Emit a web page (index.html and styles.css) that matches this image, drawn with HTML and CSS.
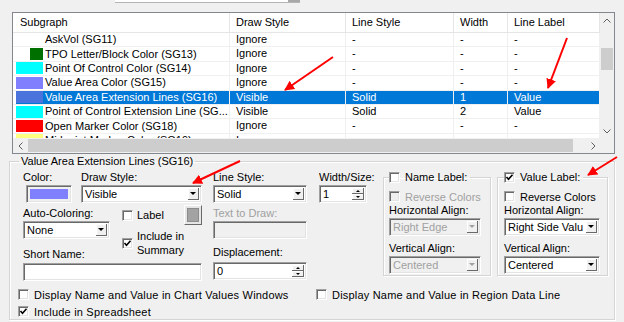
FILE: index.html
```html
<!DOCTYPE html>
<html lang="en">

<head>
    <meta charset="UTF-8">
    <meta name="viewport" content="width=device-width, initial-scale=1.0">
    <title>Subgraphs</title>
    <link rel="stylesheet" href="styles.css">
</head>

<body>
    <div class="top-combo"><span class="top-combo-btn"></span></div>

    <div class="listview">
        <div class="lv-main">
            <div class="lv-grid">
                <div class="lv-row lv-head">
                    <div class="cell">Subgraph</div>
                    <div class="cell">Draw Style</div>
                    <div class="cell">Line Style</div>
                    <div class="cell">Width</div>
                    <div class="cell">Line Label</div>
                </div>
                <div class="lv-row">
                    <div class="cell name"><span class="sw sw-none"></span>AskVol (SG11)</div>
                    <div class="cell">Ignore</div>
                    <div class="cell">-</div>
                    <div class="cell">-</div>
                    <div class="cell">-</div>
                </div>
                <div class="lv-row">
                    <div class="cell name"><span class="sw sw-small"></span>TPO Letter/Block Color (SG13)</div>
                    <div class="cell">Ignore</div>
                    <div class="cell">-</div>
                    <div class="cell">-</div>
                    <div class="cell">-</div>
                </div>
                <div class="lv-row">
                    <div class="cell name"><span class="sw sw-cyan"></span>Point Of Control Color (SG14)</div>
                    <div class="cell">Ignore</div>
                    <div class="cell">-</div>
                    <div class="cell">-</div>
                    <div class="cell">-</div>
                </div>
                <div class="lv-row">
                    <div class="cell name"><span class="sw sw-lavender"></span>Value Area Color (SG15)</div>
                    <div class="cell">Ignore</div>
                    <div class="cell">-</div>
                    <div class="cell">-</div>
                    <div class="cell">-</div>
                </div>
                <div class="lv-row selected">
                    <div class="cell name"><span class="sw sw-lavender-sel"></span>Value Area Extension Lines (SG16)</div>
                    <div class="cell">Visible</div>
                    <div class="cell">Solid</div>
                    <div class="cell">1</div>
                    <div class="cell">Value</div>
                </div>
                <div class="lv-row">
                    <div class="cell name"><span class="sw sw-cyan"></span>Point of Control Extension Line (SG...</div>
                    <div class="cell">Visible</div>
                    <div class="cell">Solid</div>
                    <div class="cell">2</div>
                    <div class="cell">Value</div>
                </div>
                <div class="lv-row">
                    <div class="cell name"><span class="sw sw-red"></span>Open Marker Color (SG18)</div>
                    <div class="cell">Ignore</div>
                    <div class="cell">-</div>
                    <div class="cell">-</div>
                    <div class="cell">-</div>
                </div>
                <div class="lv-row">
                    <div class="cell name"><span class="sw sw-yellow"></span>Midpoint Marker Color (SG19)</div>
                    <div class="cell">Ignore</div>
                    <div class="cell">-</div>
                    <div class="cell">-</div>
                    <div class="cell">-</div>
                </div>
            </div>
            <div class="vscroll">
                <div class="sb-btn"><svg width="8" height="5" viewBox="0 0 8 5"><path d="M0.5 4.5 L4 1 L7.5 4.5" fill="none" stroke="#606060"/></svg></div>
                <div class="sb-track"><div class="vthumb"></div></div>
                <div class="sb-btn"><svg width="8" height="5" viewBox="0 0 8 5"><path d="M0.5 0.5 L4 4 L7.5 0.5" fill="none" stroke="#606060"/></svg></div>
            </div>
        </div>
        <div class="hscroll">
            <div class="sb-btn"><svg width="5" height="8" viewBox="0 0 5 8"><path d="M4.5 0.5 L1 4 L4.5 7.5" fill="none" stroke="#606060"/></svg></div>
            <div class="sb-track"><div class="hthumb"></div></div>
            <div class="sb-btn"><svg width="5" height="8" viewBox="0 0 5 8"><path d="M0.5 0.5 L4 4 L0.5 7.5" fill="none" stroke="#606060"/></svg></div>
            <div class="sb-corner"></div>
        </div>
    </div>

    <fieldset class="group">
        <legend>Value Area Extension Lines (SG16)</legend>
        <div class="main-row">
            <div class="col-left">
                <div class="row1">
                    <div class="f-color">
                        <div class="lbl">Color:</div>
                        <div class="color-btn"><span></span></div>
                    </div>
                    <div class="f-draw">
                        <div class="lbl">Draw Style:</div>
                        <div class="combo"><span class="combo-text">Visible</span><span class="combo-btn"><i></i></span></div>
                    </div>
                </div>
                <div class="row2">
                    <div class="col-auto">
                        <div class="lbl">Auto-Coloring:</div>
                        <div class="combo combo-auto"><span class="combo-text">None</span><span class="combo-btn"><i></i></span></div>
                        <div class="lbl short-lbl">Short Name:</div>
                    </div>
                    <div class="col-checks">
                        <div class="label-row">
                            <span class="chk"></span><span class="chk-text">Label</span>
                            <span class="gray-btn"><span></span></span>
                        </div>
                        <div class="summary-row">
                            <span class="chk"><svg width="9" height="9" viewBox="0 0 9 9"><path d="M1.5 4 L3.5 6.2 L7.5 1.8" fill="none" stroke="#000" stroke-width="1.6"/></svg></span>
                            <span class="chk-text two-lines">Include in<br>Summary</span>
                        </div>
                    </div>
                </div>
                <div class="textbox short-input"></div>
            </div>

            <div class="col-line">
                <div class="lbl">Line Style:</div>
                <div class="combo"><span class="combo-text">Solid</span><span class="combo-btn"><i></i></span></div>
                <div class="lbl disabled gap4">Text to Draw:</div>
                <div class="textbox disabled-box"></div>
                <div class="lbl gap7">Displacement:</div>
                <div class="spin spin-disp"><span class="spin-text">0</span><span class="spin-btns"><span><i class="up"></i></span><span><i class="down"></i></span></span></div>
            </div>

            <div class="col-width">
                <div class="lbl">Width/Size:</div>
                <div class="spin"><span class="spin-text">1</span><span class="spin-btns"><span><i class="up"></i></span><span><i class="down"></i></span></span></div>
            </div>

            <fieldset class="sub-group name-group">
                <legend><span class="chk"></span><span class="chk-text">Name Label:</span></legend>
                <div class="chk-row disabled"><span class="chk"></span><span class="chk-text">Reverse Colors</span></div>
                <div class="lbl">Horizontal Align:</div>
                <div class="combo combo-off"><span class="combo-text">Right Edge</span><span class="combo-btn"><i></i></span></div>
                <div class="lbl gap6">Vertical Align:</div>
                <div class="combo combo-off gap3"><span class="combo-text">Centered</span><span class="combo-btn"><i></i></span></div>
            </fieldset>

            <fieldset class="sub-group value-group">
                <legend><span class="chk"><svg width="9" height="9" viewBox="0 0 9 9"><path d="M1.5 4 L3.5 6.2 L7.5 1.8" fill="none" stroke="#000" stroke-width="1.6"/></svg></span><span class="chk-text">Value Label:</span></legend>
                <div class="chk-row"><span class="chk"></span><span class="chk-text">Reverse Colors</span></div>
                <div class="lbl">Horizontal Align:</div>
                <div class="combo"><span class="combo-text">Right Side Valu</span><span class="combo-btn"><i></i></span></div>
                <div class="lbl gap6">Vertical Align:</div>
                <div class="combo gap3"><span class="combo-text">Centered</span><span class="combo-btn"><i></i></span></div>
            </fieldset>
        </div>

        <div class="bottom-row">
            <div class="chk-item wide"><span class="chk"></span><span class="chk-text">Display Name and Value in Chart Values Windows</span></div>
            <div class="chk-item"><span class="chk"></span><span class="chk-text">Display Name and Value in Region Data Line</span></div>
        </div>
        <div class="bottom-row second">
            <div class="chk-item"><span class="chk"><svg width="9" height="9" viewBox="0 0 9 9"><path d="M1.5 4 L3.5 6.2 L7.5 1.8" fill="none" stroke="#000" stroke-width="1.6"/></svg></span><span class="chk-text">Include in Spreadsheet</span></div>
        </div>
    </fieldset>

    <!-- red annotation arrows drawn over the dialog -->
    <svg class="arrows" width="624" height="322" viewBox="0 0 624 322">
        <defs>
            <marker id="head" viewBox="0 0 10 10" refX="9" refY="5" markerWidth="5" markerHeight="5" orient="auto">
                <path d="M0 0 L10 5 L0 10 z" fill="#ff0000"/>
            </marker>
        </defs>
        <line x1="333" y1="57" x2="285" y2="90" stroke="#ff0000" stroke-width="2" marker-end="url(#head)"/>
        <line x1="567" y1="38" x2="548" y2="88" stroke="#ff0000" stroke-width="2" marker-end="url(#head)"/>
        <line x1="240" y1="161" x2="193" y2="183" stroke="#ff0000" stroke-width="2" marker-end="url(#head)"/>
        <line x1="617" y1="157" x2="588" y2="175" stroke="#ff0000" stroke-width="2" marker-end="url(#head)"/>
    </svg>
</body>

</html>
```

FILE: styles.css
```css
* {
    box-sizing: border-box;
}

body {
    font-family: "Liberation Sans", Arial, sans-serif;
    font-size: 11px;
    color: #000;
    margin: 0;
    width: 624px;
    height: 322px;
    overflow: hidden;
    background-color: #f0f0f0;
}

/* combo cut off at the top edge */
.top-combo {
    margin-left: 115px;
    width: 185px;
    height: 3px;
    background-color: #fff;
    border-bottom: 1px solid #b4b4b4;
    display: flex;
    justify-content: flex-end;
}

.top-combo-btn {
    width: 12px;
    background-color: #a8a8a8;
}

/* list view */
.listview {
    margin: 9px 9px 0 12px;
    border: 1px solid #828790;
    background-color: #fff;
}

.lv-main {
    display: flex;
    height: 125px;
}

.lv-grid {
    width: 587px;
    overflow: hidden;
}

.lv-row {
    display: grid;
    grid-template-columns: 217px 116px 108px 54px 92px;
    height: 14.4px;
    border-bottom: 1px solid #f0f0f0;
}

.lv-row .cell {
    padding-left: 6px;
    line-height: 13px;
    white-space: nowrap;
    overflow: hidden;
    border-right: 1px solid #f0f0f0;
}

.lv-head {
    height: 20px;
    border-bottom: 1px solid #e5e5e5;
}

.lv-head .cell {
    line-height: 19px;
    border-right: 1px solid #e5e5e5;
}

.lv-head .cell:first-child {
    padding-left: 7px;
}

.lv-row .name {
    display: flex;
    align-items: center;
    padding-left: 3px;
}

.sw {
    flex: none;
    width: 27px;
    height: 12px;
    margin-right: 2px;
}

.sw-small {
    width: 13px;
    margin-left: 14px;
    background-color: #007000;
}

.sw-cyan {
    background-color: #00ffff;
}

.sw-lavender {
    background-color: #8080ff;
}

.sw-lavender-sel {
    background-color: #4a74dc;
}

.sw-red {
    background-color: #ff0000;
}

.sw-yellow {
    background-color: #ffff80;
}

.lv-row.selected {
    background-color: #0078d7;
    color: #fff;
}

.lv-row.selected .name {
    box-shadow: inset 3px 0 0 #fff;
}

/* scroll bars */
.vscroll {
    width: 14px;
    display: flex;
    flex-direction: column;
    background-color: #f0f0f0;
}

.sb-btn {
    flex: none;
    width: 14px;
    height: 14px;
    display: flex;
    align-items: center;
    justify-content: center;
}

.sb-track {
    flex: 1;
}

.vthumb {
    margin: 21px 1px 0 1px;
    height: 22px;
    background-color: #cdcdcd;
}

.hscroll {
    display: flex;
    height: 15px;
    background-color: #f0f0f0;
}

.hscroll .sb-btn {
    height: 15px;
}

.hthumb {
    margin: 1px 0 0 1px;
    width: 545px;
    height: 13px;
    background-color: #cdcdcd;
}

.sb-corner {
    width: 14px;
}

/* group boxes */
.group {
    margin: 1px 9px 0 9px;
    padding: 0 0 1px 8px;
    border: 1px solid #d5d5d5;
    box-shadow: inset 1px 1px 0 #fff, 1px 1px 0 #fff;
}

.group > legend {
    margin-left: 1px;
    padding: 0 2px;
    line-height: 13px;
}

.main-row {
    display: flex;
    align-items: flex-start;
    margin: 3px 0 0 5px;
}

.lbl {
    height: 13px;
    line-height: 13px;
    white-space: nowrap;
}

.disabled,
.disabled .chk-text {
    color: #a0a0a0;
}

.gap3 {
    margin-top: 3px;
}

.gap4 {
    margin-top: 4px;
}

.gap6 {
    margin-top: 6px;
}

.gap7 {
    margin-top: 7px;
}

/* sunken controls */
.combo,
.textbox,
.spin,
.color-btn,
.chk {
    border: 1px solid;
    border-color: #a0a0a0 #fff #fff #a0a0a0;
    box-shadow: inset 1px 1px 0 #696969, inset -1px -1px 0 #e3e3e3;
    background-color: #fff;
}

.combo {
    display: flex;
    height: 18px;
    margin-top: 1px;
}

.combo-text {
    flex: 1;
    padding-left: 3px;
    line-height: 16px;
    white-space: nowrap;
    overflow: hidden;
}

.combo-btn {
    flex: none;
    width: 11px;
    margin: 2px 2px 2px 0;
    display: flex;
    align-items: center;
    justify-content: center;
    background-color: #f0f0f0;
    border-right: 1px solid #696969;
    border-bottom: 1px solid #696969;
    box-shadow: inset 1px 1px 0 #fff;
}

.combo-btn i {
    border-top: 3px solid #000;
    border-left: 3px solid transparent;
    border-right: 3px solid transparent;
}

.combo-off {
    background-color: #f0f0f0;
    color: #a0a0a0;
}

.combo-off .combo-btn i {
    border-top-color: #a0a0a0;
}

.textbox {
    height: 18px;
    margin-top: 1px;
}

.disabled-box {
    background-color: #f0f0f0;
}

.spin {
    display: flex;
    height: 18px;
    margin-top: 1px;
}

.spin-disp {
    margin-top: 3px;
}

.spin-text {
    flex: 1;
    padding-left: 3px;
    line-height: 16px;
}

.spin-btns {
    flex: none;
    width: 12px;
    margin: 2px 2px 2px 0;
    display: flex;
    flex-direction: column;
}

.spin-btns span {
    flex: 1;
    display: flex;
    align-items: center;
    justify-content: center;
    background-color: #f0f0f0;
    border-right: 1px solid #696969;
    border-bottom: 1px solid #696969;
    box-shadow: inset 1px 1px 0 #fff;
}

.spin-btns i.up {
    border-bottom: 2px solid #000;
    border-left: 2px solid transparent;
    border-right: 2px solid transparent;
}

.spin-btns i.down {
    border-top: 2px solid #000;
    border-left: 2px solid transparent;
    border-right: 2px solid transparent;
}

/* left column */
.col-left {
    width: 179px;
}

.row1 {
    display: flex;
}

.f-color {
    width: 58px;
}

.f-draw {
    width: 121px;
}

.color-btn {
    width: 46px;
    height: 18px;
    margin: 1px 0 0 3px;
    padding: 3px;
    background-color: #f0f0f0;
}

.color-btn span {
    display: block;
    height: 100%;
    background-color: #8080ff;
}

.row2 {
    display: flex;
    margin-top: 2px;
}

.col-auto {
    width: 99px;
    padding-top: 2px;
}

.combo-auto {
    width: 87px;
}

.short-lbl {
    margin-top: 9px;
}

.col-checks {
    width: 80px;
}

.label-row {
    display: flex;
    align-items: center;
    height: 20px;
}

.gray-btn {
    margin-left: auto;
    width: 18px;
    height: 20px;
    padding: 2px;
    border: 1px solid;
    border-color: #fff #696969 #696969 #fff;
    background-color: #e6e6e6;
}

.gray-btn span {
    display: block;
    height: 100%;
    background-color: #a3a3a3;
    border: 1px solid #8c8c8c;
}

.summary-row {
    display: flex;
    align-items: center;
    margin-top: 4px;
}

.two-lines {
    line-height: 14px;
}

.short-input {
    width: 179px;
    margin-top: 2px;
}

/* checkboxes */
.chk {
    flex: none;
    display: inline-flex;
    align-items: center;
    justify-content: center;
    width: 11px;
    height: 11px;
}

.chk-text {
    margin-left: 4px;
    white-space: nowrap;
}

.disabled .chk {
    background-color: #f0f0f0;
}

/* middle columns */
.col-line {
    width: 94px;
    margin-left: 11px;
}

.col-width {
    width: 48px;
    margin-left: 12px;
}

/* label groups */
.sub-group {
    margin: 0;
    padding: 0 0 1px 5px;
    border: 1px solid #d5d5d5;
    box-shadow: inset 1px 1px 0 #fff, 1px 1px 0 #fff;
}

.sub-group legend {
    display: flex;
    align-items: center;
    height: 13px;
    padding: 0 3px 0 0;
    line-height: 13px;
}

.sub-group .chk-text {
    margin-left: 5px;
}

.name-group {
    width: 108px;
    margin-left: 16px;
}

.value-group {
    width: 111px;
    margin-left: 6px;
    padding-left: 6px;
}

.name-group .combo {
    width: 92px;
}

.value-group .combo {
    width: 96px;
}

.chk-row {
    display: flex;
    align-items: center;
    height: 13px;
    margin-top: 6px;
}

.chk-row + .lbl {
    margin-top: 1px;
}

/* bottom checkboxes */
.bottom-row {
    display: flex;
    align-items: center;
    height: 13px;
    margin-top: 7px;
    letter-spacing: 0.2px;
}

.bottom-row.second {
    margin-top: 4px;
}

.chk-item {
    display: flex;
    align-items: center;
}

.chk-item .chk-text {
    margin-left: 5px;
}

.chk-item.wide {
    width: 298px;
}

.arrows {
    position: absolute;
    top: 0;
    left: 0;
    pointer-events: none;
}
```
